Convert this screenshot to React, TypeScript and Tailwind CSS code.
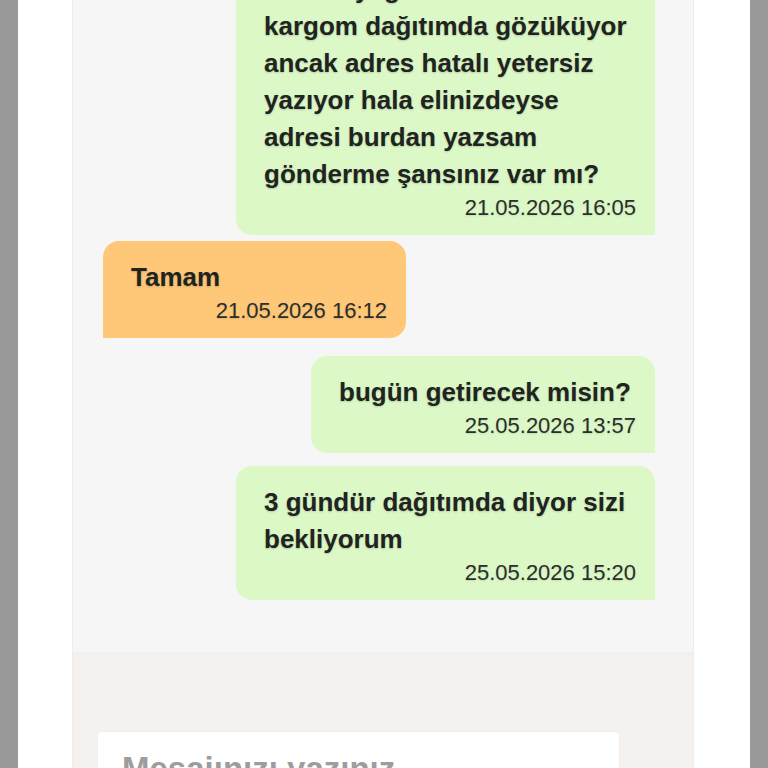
import React from "react";

type Msg = {
  side: "me" | "them";
  lines: string[];
  time: string;
  width: number;
  mt: string;
};

const messages: Msg[] = [
  {
    side: "me",
    lines: [
      "Selam iyi günler",
      "kargom dağıtımda gözüküyor",
      "ancak adres hatalı yetersiz",
      "yazıyor hala elinizdeyse",
      "adresi burdan yazsam",
      "gönderme şansınız var mı?",
    ],
    time: "21.05.2026 16:05",
    width: 419,
    mt: "mt-0",
  },
  {
    side: "them",
    lines: ["Tamam"],
    time: "21.05.2026 16:12",
    width: 303,
    mt: "mt-[6px]",
  },
  {
    side: "me",
    lines: ["bugün getirecek misin?"],
    time: "25.05.2026 13:57",
    width: 344,
    mt: "mt-[18px]",
  },
  {
    side: "me",
    lines: ["3 gündür dağıtımda diyor sizi", "bekliyorum"],
    time: "25.05.2026 15:20",
    width: 419,
    mt: "mt-[13px]",
  },
];

function Bubble({ m }: { m: Msg }) {
  const me = m.side === "me";
  return (
    <div
      className={
        (me
          ? "self-end rounded-[16px] rounded-br-none bg-[#dcf8c7] "
          : "self-start rounded-[16px] rounded-bl-none bg-[#fec878] ") +
        m.mt +
        " flex shrink-0 flex-col pb-[14px] pl-[28px] pr-[19px] pt-[18px]"
      }
      style={{ width: m.width }}
    >
      <div className="flex flex-col text-[26px] font-bold leading-[37px] text-[#1f241f] [text-shadow:0_1px_2px_rgba(0,0,0,0.18)]">
        {m.lines.map((l, i) => (
          <span key={i} className="whitespace-nowrap">
            {l}
          </span>
        ))}
      </div>
      <div className="mt-[2px] whitespace-nowrap text-right text-[22px] leading-[26px] text-[#2b2f2b] [text-shadow:0_1px_2px_rgba(0,0,0,0.12)]">
        {m.time}
      </div>
    </div>
  );
}

export default function App() {
  return (
    <div
      className="flex h-[768px] w-[768px] overflow-hidden bg-white"
      style={{ fontFamily: '"Liberation Sans", Arial, Helvetica, sans-serif' }}
    >
      <div className="w-[18px] shrink-0 bg-[#999999]" />
      <div className="w-[54px] shrink-0 bg-white" />
      <div className="flex w-[622px] shrink-0 flex-col border-x border-[#eeeeee]">
        <div className="flex h-[652px] shrink-0 flex-col justify-end overflow-hidden bg-[#f6f6f7] pb-[52px] pl-[30px] pr-[38px]">
          {messages.map((m, i) => (
            <Bubble key={i} m={m} />
          ))}
        </div>
        <div className="flex-1 bg-[#f4f1ee] pl-[24px] pr-[73px] pt-[79px] shadow-[inset_0_8px_8px_-6px_rgba(0,0,0,0.015)]">
          <div className="h-[80px] whitespace-nowrap rounded-[4px] border border-[#f1eee9] bg-white pl-[24px] pt-[17px] text-[33px] font-bold leading-[40px] text-[#9d9d9d]">
            Mesajınızı yazınız
          </div>
        </div>
      </div>
      <div className="w-[56px] shrink-0 bg-white" />
      <div className="w-[18px] shrink-0 bg-[#999999]" />
    </div>
  );
}
